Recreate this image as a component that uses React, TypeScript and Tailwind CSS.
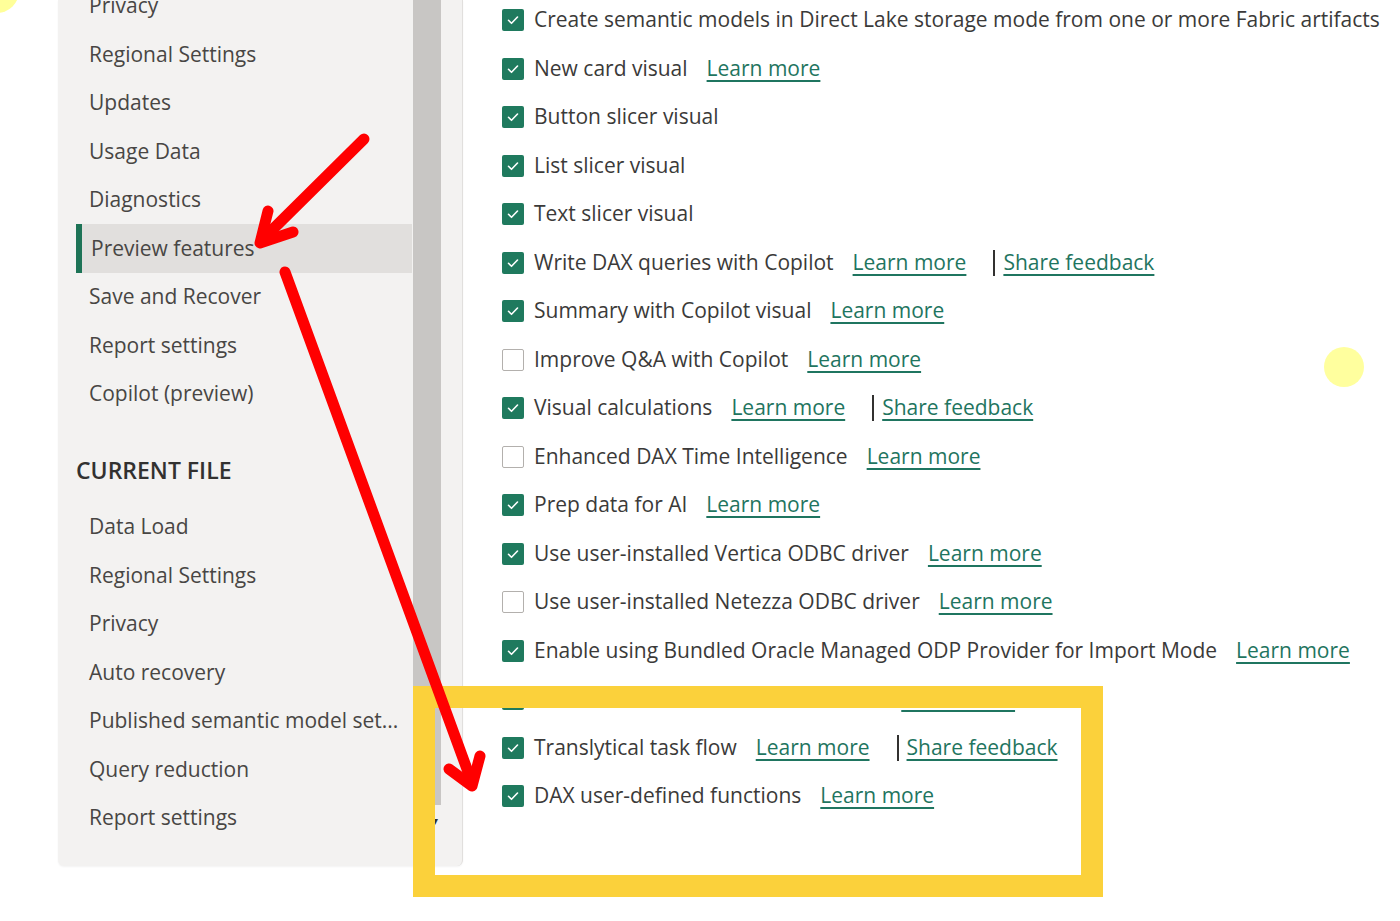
import { Fragment } from 'react';

type Feature = {
  label: string;
  checked: boolean;
  learn?: boolean;
  feedback?: boolean;
};

const globalItems = [
  'Privacy',
  'Regional Settings',
  'Updates',
  'Usage Data',
  'Diagnostics',
  'Preview features',
  'Save and Recover',
  'Report settings',
  'Copilot (preview)',
];

const fileItems = [
  'Data Load',
  'Regional Settings',
  'Privacy',
  'Auto recovery',
  'Published semantic model set...',
  'Query reduction',
  'Report settings',
];

const features: Feature[] = [
  { label: 'Create semantic models in Direct Lake storage mode from one or more Fabric artifacts', checked: true },
  { label: 'New card visual', checked: true, learn: true },
  { label: 'Button slicer visual', checked: true },
  { label: 'List slicer visual', checked: true },
  { label: 'Text slicer visual', checked: true },
  { label: 'Write DAX queries with Copilot', checked: true, learn: true, feedback: true },
  { label: 'Summary with Copilot visual', checked: true, learn: true },
  { label: 'Improve Q&A with Copilot', checked: false, learn: true },
  { label: 'Visual calculations', checked: true, learn: true, feedback: true },
  { label: 'Enhanced DAX Time Intelligence', checked: false, learn: true },
  { label: 'Prep data for AI', checked: true, learn: true },
  { label: 'Use user-installed Vertica ODBC driver', checked: true, learn: true },
  { label: 'Use user-installed Netezza ODBC driver', checked: false, learn: true },
  { label: 'Enable using Bundled Oracle Managed ODP Provider for Import Mode', checked: true, learn: true },
  /* mostly hidden behind the yellow frame */
  { label: 'Direct Lake semantic model on web', checked: true, learn: true },
  { label: 'Translytical task flow', checked: true, learn: true, feedback: true },
  { label: 'DAX user-defined functions', checked: true, learn: true },
];

function Checkbox({ checked }: { checked: boolean }) {
  if (!checked)
    return <span className="h-[22px] w-[22px] shrink-0 rounded-[2px] border border-[#b3b0ad] bg-white" />;
  return (
    <span className="flex h-[22px] w-[22px] shrink-0 items-center justify-center rounded-[2px] bg-[#1f7a5e]">
      <svg width="14" height="14" viewBox="0 0 14 14" fill="none">
        <path d="M2.5 7.3l3 3 6-6.3" stroke="white" strokeWidth="1.6" strokeLinecap="round" strokeLinejoin="round" />
      </svg>
    </span>
  );
}

function LinkText({ children }: { children: string }) {
  return <span className="text-[#1f7560] underline decoration-[1.5px] underline-offset-[4px]">{children}</span>;
}

export default function App() {
  return (
    <div
      className="relative flex h-[921px] w-[1400px] overflow-hidden bg-white text-[21px]"
      style={{ fontFamily: '"Segoe UI", "Open Sans", sans-serif' }}
    >
      {/* -------------- left nav panel ----------------------- */}
      <div className="pl-[58px]">
        <div className="flex h-[866px] w-[405px] overflow-hidden rounded-b-[6px] border-r border-[#e1dfdd] bg-[#f3f2f1] shadow-[0_1px_2px_rgba(0,0,0,0.05)]">
          <div className="w-[356px] pl-[18px] text-[#484644]">
            <div className="-mt-[18.25px]">
              {globalItems.map((item) =>
                item === 'Preview features' ? (
                  <div
                    key={item}
                    className="flex h-[48.5px] w-[336px] items-center border-l-[6px] border-[#1d7356] bg-[#e1dfdd] pl-[9px]"
                  >
                    {item}
                  </div>
                ) : (
                  <div key={item} className="flex h-[48.5px] items-center pl-[13px]">
                    {item}
                  </div>
                )
              )}
            </div>
            <div className="mt-[28px] mb-[8.5px] flex h-[48px] items-center text-[23px] font-semibold text-[#323130]">
              CURRENT FILE
            </div>
            {fileItems.map((item, i) => (
              <div key={i} className="flex h-[48.5px] items-center whitespace-nowrap pl-[13px]">
                {item}
              </div>
            ))}
          </div>
          {/* scrollbar */}
          <div className="flex w-[49px] flex-col">
            <div className="h-[805px] w-[28px] bg-[#c8c6c4]" />
            <div className="mt-[10px] pl-[19px] text-[12px] leading-none text-[#323130]">▾</div>
          </div>
        </div>
      </div>

      {/* -------------- feature list ------------------------- */}
      <div className="-mt-[4.25px] pl-[39px] text-[#3b3a39]">
        {features.map((f, i) => (
          <div key={i} className="flex h-[48.5px] items-center whitespace-nowrap">
            <Checkbox checked={f.checked} />
            <span className="ml-[10px]">{f.label}</span>
            {f.learn && (
              <span className="ml-[19px]">
                <LinkText>Learn more</LinkText>
              </span>
            )}
            {f.feedback && (
              <Fragment>
                <span className="ml-[27px] h-[26px] w-[2px] bg-[#323130]" />
                <span className="ml-[8px]">
                  <LinkText>Share feedback</LinkText>
                </span>
              </Fragment>
            )}
          </div>
        ))}
      </div>

      {/* -------------- annotations -------------------------- */}
      <div className="absolute left-[413px] top-[686px] h-[211px] w-[690px] border-[22px] border-[#fbd13b]" />
      <svg className="pointer-events-none absolute left-0 top-0" width="1400" height="921">
        <circle cx="-3" cy="-9" r="22" fill="#ffff99" />
        <circle cx="1344" cy="367" r="20" fill="#ffff9e" />
        <g stroke="#ff0000" strokeWidth="11" strokeLinecap="round" strokeLinejoin="round" fill="none">
          <line x1="364" y1="139" x2="264" y2="238" />
          <polyline points="268,211 260,243 293,232" />
          <line x1="285" y1="272" x2="471" y2="780" />
          <polyline points="449,769 472,786 480,756" />
        </g>
      </svg>
    </div>
  );
}
